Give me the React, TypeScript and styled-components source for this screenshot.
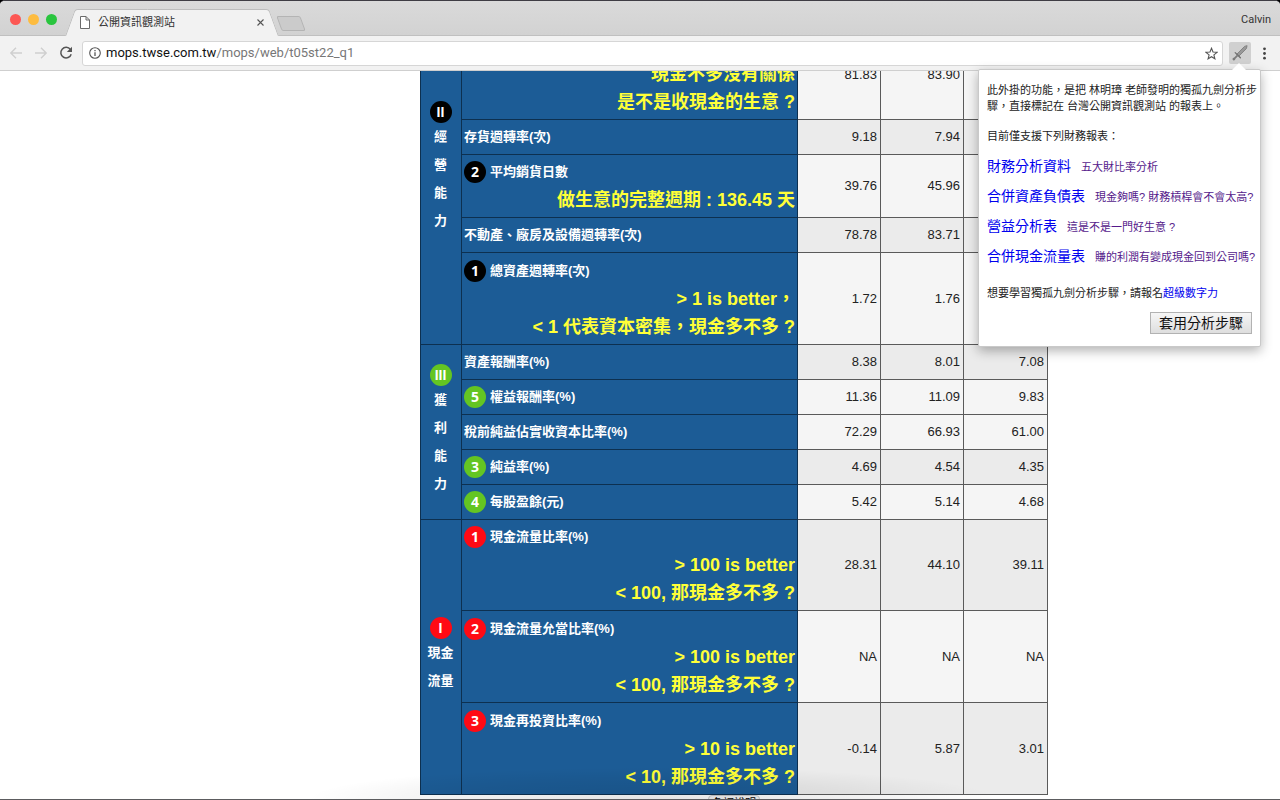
import React from "react";
import styled, { createGlobalStyle, css } from "styled-components";

const cjk = '"Noto Sans CJK TC", sans-serif';

const GlobalStyle = createGlobalStyle`
  * { box-sizing: border-box; }
  body {
    margin: 0;
    background: #000;
    font-family: "Liberation Sans", ${cjk};
  }
`;

const Window = styled.div`
  position: relative;
  display: flex;
  flex-direction: column;
  height: 100vh;
  background: #fff;
  border-top: 1px solid #3f3d44;
  border-bottom: 1px solid #5c5c5f;
  border-radius: 5px 5px 0 0;
  overflow: hidden;
`;

const TabStrip = styled.header`
  display: flex;
  align-items: flex-end;
  flex: none;
  height: 35px;
  padding: 0 9px 0 10px;
  background: linear-gradient(#dadada, #d2d2d2);
  border-bottom: 1px solid #c0c0c0;
`;

const TrafficLights = styled.div`
  display: flex;
  gap: 7px;
  width: 60px;
  padding-bottom: 10px;
`;

const Light = styled.button<{ $color: string }>`
  width: 11px;
  height: 11px;
  padding: 0;
  border: 0;
  border-radius: 50%;
  background: ${(p) => p.$color};
`;

const Tab = styled.div`
  position: relative;
  display: flex;
  align-items: center;
  width: 204px;
  height: 27px;
  margin-bottom: -1px;
  padding: 0 10px;
  font: 11px/16px Roboto, ${cjk};
  color: #333;

  &::before,
  &::after {
    content: "";
    position: absolute;
    top: 0;
    bottom: 0;
    background: #f2f2f2;
    border: 0 solid #bdbdbd;
    border-top-width: 1px;
  }
  &::before {
    left: 0;
    right: 40%;
    border-left-width: 1px;
    border-top-left-radius: 3px;
    transform: skewX(-20deg);
  }
  &::after {
    left: 40%;
    right: 0;
    border-right-width: 1px;
    border-top-right-radius: 3px;
    transform: skewX(20deg);
  }
  > * {
    position: relative;
    z-index: 1;
  }
`;

const TabTitle = styled.span`
  flex: 1;
  margin-left: 8px;
`;

const IconButton = styled.button<{ $active?: boolean }>`
  display: flex;
  align-items: center;
  justify-content: center;
  flex: none;
  padding: 0;
  border: 0;
  background: none;
  ${(p) =>
    p.$active &&
    css`
      width: 22px;
      height: 22px;
      border-radius: 2px;
      background: #d0d0d0;
    `}
`;

const NewTab = styled.button`
  width: 24px;
  height: 15px;
  margin: 0 0 4px 5px;
  padding: 0;
  border: 1px solid #b4b4b4;
  border-radius: 2px;
  background: #cbcbcb;
  transform: skewX(20deg);
`;

const Profile = styled.button`
  margin-left: auto;
  padding: 0 0 7px;
  border: 0;
  background: none;
  font: 11px/16px Roboto, sans-serif;
  color: #333;
`;

const Toolbar = styled.div`
  display: flex;
  align-items: center;
  flex: none;
  height: 35px;
  padding: 0 14px 0 9px;
  background: #f2f2f2;
  border-bottom: 1px solid #cfcfcf;
`;

const NavButtons = styled.div`
  display: flex;
  gap: 11px;
  width: 73px;
`;

const AddressBar = styled.div`
  display: flex;
  align-items: center;
  flex: 1;
  height: 25px;
  margin-right: 6px;
  padding: 0 4px 0 6px;
  gap: 5px;
  border: 1px solid #d6d6d6;
  border-radius: 3px;
  background: #fff;
`;

const Url = styled.a`
  flex: 1;
  font: 13px/20px Roboto, sans-serif;
  color: #777;
  text-decoration: none;
  b {
    font-weight: 400;
    color: #111;
  }
`;

const MenuButton = styled(IconButton)`
  margin-left: 12px;
`;

const Page = styled.main`
  flex: 1;
  min-height: 0;
  overflow: hidden;
  padding-left: 420px;
`;

const Scrolled = styled.div`
  width: 628px;
  margin-top: -15px;
`;

const Report = styled.table`
  width: 100%;
  table-layout: fixed;
  border-collapse: collapse;
  font-size: 13px;
  line-height: 28px;
  color: #222;
`;

const Row = styled.tr<{ $shade: boolean; $height: number }>`
  height: ${(p) => p.$height}px;
  background: ${(p) => (p.$shade ? "#ebebeb" : "#f5f5f5")};
`;

const headCell = css`
  border: 1px solid #0d3050;
  background: #1c5c96;
  color: #fff;
  font-weight: 700;
`;

const GroupCell = styled.th<{ $top: boolean }>`
  ${headCell}
  padding: ${(p) => (p.$top ? "44px 3px 3px 2px" : "0 3px 3px 2px")};
  vertical-align: ${(p) => (p.$top ? "top" : "middle")};
  text-align: center;
`;

const NameCell = styled.th`
  ${headCell}
  padding: 3px 2px;
  text-align: left;
`;

const Value = styled.td<{ $top: boolean }>`
  padding: ${(p) => (p.$top ? "4px 3px 0" : "0 3px")};
  border: 1px solid #5a5a5a;
  text-align: right;
  vertical-align: ${(p) => (p.$top ? "top" : "middle")};
`;

const Name = styled.div`
  display: flex;
  align-items: center;
  gap: 4px;
  height: 28px;
`;

const Note = styled.div`
  font-size: 18px;
  text-align: right;
  color: #ffff38;
  white-space: nowrap;
`;

const Badge = styled.span<{ $color: string }>`
  display: block;
  flex: none;
  width: 22px;
  height: 22px;
  border-radius: 50%;
  background: ${(p) => p.$color};
  font: 700 14px/22px "Noto Sans", sans-serif;
  text-align: center;
  color: #fff;
`;

const GroupBadge = styled(Badge)`
  margin: 0 auto;
  font-family: "Liberation Sans", sans-serif;
`;

const PageButton = styled.button`
  display: block;
  margin: 0 auto;
  padding: 0 3px;
  border: 1px solid #c8c8c8;
  border-radius: 4px;
  background: #f3f3f3;
  font: 11px/14px "Liberation Sans", ${cjk};
`;

const DockShadow = styled.div`
  position: absolute;
  left: 24%;
  right: 22%;
  bottom: 0;
  height: 32px;
  pointer-events: none;
  background: radial-gradient(ellipse 50% 100% at 50% 100%, rgba(0, 0, 0, 0.1), rgba(0, 0, 0, 0.05) 60%, transparent);
`;

const Popup = styled.section`
  position: absolute;
  top: 68px;
  right: 19px;
  width: 283px;
  padding: 12px 8px;
  border: 1px solid #c9c9c9;
  border-radius: 2px;
  background: #fff;
  box-shadow: 0 4px 12px rgba(0, 0, 0, 0.3);
  font-size: 11px;
  line-height: 16px;
  color: #222;
  white-space: nowrap;

  &::before {
    content: "";
    position: absolute;
    top: -7px;
    right: 14px;
    border: 7px solid transparent;
    border-top-width: 0;
    border-bottom-color: #fff;
  }
`;

const Paragraph = styled.p`
  margin: 0 0 14px;
`;

const ReportList = styled.ul`
  margin: -7px 0 14px;
  padding: 0;
  list-style: none;
`;

const ReportItem = styled.li`
  height: 30px;
  line-height: 30px;
`;

const ReportLink = styled.a`
  margin-right: 10px;
  font-size: 14px;
  color: #00e;
  text-decoration: none;
`;

const VisitedLink = styled.a`
  color: #551a8b;
  text-decoration: none;
`;

const CourseLink = styled.a`
  color: #00e;
  text-decoration: none;
`;

const ApplyButton = styled.button`
  display: block;
  height: 22px;
  margin: -3px 0 0 auto;
  padding: 0 8px;
  border: 1px solid #b2b2b2;
  background: linear-gradient(#f6f6f6, #dedede);
  font: 14px/20px "Liberation Sans", ${cjk};
  color: #111;
`;

type Entry = {
  name?: string;
  step?: string;
  notes?: string[];
  values: string[];
  height: number;
  shade: boolean;
};

type Group = {
  numeral: string;
  color: string;
  lines: string[];
  top?: boolean;
  rows: Entry[];
};

const groups: Group[] = [
  {
    numeral: "II",
    color: "#000",
    lines: ["經", "營", "能", "力"],
    top: true,
    rows: [
      { notes: ["現金不多沒有關係", "是不是收現金的生意 ?"], values: ["81.83", "83.90", ""], height: 63, shade: false },
      { name: "存貨週轉率(次)", values: ["9.18", "7.94", ""], height: 35, shade: true },
      { name: "平均銷貨日數", step: "2", notes: ["做生意的完整週期 : 136.45 天"], values: ["39.76", "45.96", ""], height: 63, shade: false },
      { name: "不動產、廠房及設備週轉率(次)", values: ["78.78", "83.71", ""], height: 35, shade: true },
      { name: "總資產週轉率(次)", step: "1", notes: ["> 1 is better，", "< 1 代表資本密集，現金多不多 ?"], values: ["1.72", "1.76", ""], height: 92, shade: false },
    ],
  },
  {
    numeral: "III",
    color: "#64c522",
    lines: ["獲", "利", "能", "力"],
    rows: [
      { name: "資產報酬率(%)", values: ["8.38", "8.01", "7.08"], height: 35, shade: true },
      { name: "權益報酬率(%)", step: "5", values: ["11.36", "11.09", "9.83"], height: 35, shade: false },
      { name: "稅前純益佔實收資本比率(%)", values: ["72.29", "66.93", "61.00"], height: 35, shade: false },
      { name: "純益率(%)", step: "3", values: ["4.69", "4.54", "4.35"], height: 35, shade: true },
      { name: "每股盈餘(元)", step: "4", values: ["5.42", "5.14", "4.68"], height: 35, shade: false },
    ],
  },
  {
    numeral: "I",
    color: "#ff0a14",
    lines: ["現金", "流量"],
    rows: [
      { name: "現金流量比率(%)", step: "1", notes: ["> 100 is better", "< 100, 那現金多不多 ?"], values: ["28.31", "44.10", "39.11"], height: 91, shade: true },
      { name: "現金流量允當比率(%)", step: "2", notes: ["> 100 is better", "< 100, 那現金多不多 ?"], values: ["NA", "NA", "NA"], height: 92, shade: false },
      { name: "現金再投資比率(%)", step: "3", notes: ["> 10 is better", "< 10, 那現金多不多 ?"], values: ["-0.14", "5.87", "3.01"], height: 92, shade: true },
    ],
  },
];

const links = [
  ["財務分析資料", "五大財比率分析"],
  ["合併資產負債表", "現金夠嗎? 財務槓桿會不會太高?"],
  ["營益分析表", "這是不是一門好生意 ?"],
  ["合併現金流量表", "賺的利潤有變成現金回到公司嗎?"],
];

const Arrow = ({ back }: { back?: boolean }) => (
  <svg width="14" height="14" viewBox="0 0 14 14" fill="none" stroke="#cfcfcf" strokeWidth="1.4">
    <path d={back ? "M13 7H2M7 1.8 1.8 7 7 12.2" : "M1 7h11M7 1.8 12.2 7 7 12.2"} />
  </svg>
);

export default function App() {
  return (
    <>
      <GlobalStyle />
      <Window>
        <TabStrip>
          <TrafficLights>
            <Light $color="#fc5753" aria-label="Close window" />
            <Light $color="#fdbc40" aria-label="Minimise" />
            <Light $color="#29c53e" aria-label="Zoom" />
          </TrafficLights>
          <Tab>
            <svg width="10" height="13" viewBox="0 0 10 13" fill="#fff" stroke="#6a6a6a">
              <path d="M.5.5H6l3.500 3.500v8.500H.5zM6 .5V4h3.500" />
            </svg>
            <TabTitle>公開資訊觀測站</TabTitle>
            <IconButton aria-label="Close tab">
              <svg width="7" height="7" viewBox="0 0 7 7" stroke="#555" strokeWidth="1.1">
                <path d="m.5.5 6 6m0-6-6 6" />
              </svg>
            </IconButton>
          </Tab>
          <NewTab aria-label="New tab" />
          <Profile>Calvin</Profile>
        </TabStrip>

        <Toolbar>
          <NavButtons>
            <IconButton aria-label="Back">
              <Arrow back />
            </IconButton>
            <IconButton aria-label="Forward">
              <Arrow />
            </IconButton>
            <IconButton aria-label="Reload">
              <svg width="14" height="14" viewBox="0 0 14 14" fill="none" stroke="#555" strokeWidth="1.5">
                <path d="M11.400 3.500A5.300 5.300 0 1 0 12.200 8.200" />
                <path d="M13 .8v5.200H7.800z" fill="#555" stroke="none" />
              </svg>
            </IconButton>
          </NavButtons>
          <AddressBar>
            <svg width="12" height="12" viewBox="0 0 12 12" fill="none" stroke="#555" strokeWidth="1.1">
              <circle cx="6" cy="6" r="5.300" />
              <path d="M6 5.200v3.700M6 3v1.300" strokeWidth="1.3" />
            </svg>
            <Url href="#">
              <b>mops.twse.com.tw</b>/mops/web/t05st22_q1
            </Url>
            <IconButton aria-label="Bookmark">
              <svg width="13" height="13" viewBox="0 0 13 13" fill="none" stroke="#555" strokeWidth="1.1">
                <path d="m6.500 1.300 1.500 3.700 4 .3-3.100 2.600 1 3.900-3.400-2.100-3.400 2.100 1-3.900L1 5.300l4-.3z" />
              </svg>
            </IconButton>
          </AddressBar>
          <IconButton $active aria-label="Extension">
            <svg width="16" height="16" viewBox="0 0 16 16" fill="none" strokeLinecap="round">
              <path d="M15 1l-.6 2.600-7.600 7.600-2-2 7.600-7.600z" fill="#999" stroke="#777" strokeWidth=".8" strokeLinejoin="round" />
              <path d="M3.200 7.600l5.200 5.200" stroke="#707070" strokeWidth="1.3" />
              <path d="M5.300 10.700l-3.500 3.500" stroke="#7c7c7c" strokeWidth="1.8" />
              <circle cx="1.900" cy="14.100" r="1.400" fill="#7c7c7c" />
            </svg>
          </IconButton>
          <MenuButton aria-label="Menu">
            <svg width="3" height="13" viewBox="0 0 3 13" fill="#444">
              <circle cx="1.500" cy="1.800" r="1.400" />
              <circle cx="1.500" cy="6.500" r="1.400" />
              <circle cx="1.500" cy="11.200" r="1.400" />
            </svg>
          </MenuButton>
        </Toolbar>

        <Page>
          <Scrolled>
            <Report>
              <colgroup>
                <col style={{ width: 41 }} />
                <col />
                <col style={{ width: 83 }} />
                <col style={{ width: 83 }} />
                <col style={{ width: 84 }} />
              </colgroup>
              <tbody>
                {groups.map((group) =>
                  group.rows.map((row, i) => {
                    const cut = !row.name;
                    return (
                      <Row key={group.numeral + i} $shade={row.shade} $height={row.height}>
                        {i === 0 && (
                          <GroupCell rowSpan={group.rows.length} scope="rowgroup" $top={!!group.top}>
                            <GroupBadge $color={group.color}>{group.numeral}</GroupBadge>
                            {group.lines.map((line) => (
                              <div key={line}>{line}</div>
                            ))}
                          </GroupCell>
                        )}
                        <NameCell scope="row">
                          {row.name && (
                            <Name>
                              {row.step && <Badge $color={group.color}>{row.step}</Badge>}
                              {row.name}
                            </Name>
                          )}
                          {row.notes?.map((note) => (
                            <Note key={note}>{note}</Note>
                          ))}
                        </NameCell>
                        {row.values.map((value, n) => (
                          <Value key={n} $top={cut}>
                            {value}
                          </Value>
                        ))}
                      </Row>
                    );
                  })
                )}
              </tbody>
            </Report>
            <PageButton>名詞說明</PageButton>
          </Scrolled>
        </Page>

        <DockShadow />

        <Popup>
          <Paragraph>
            此外掛的功能，是把 林明璋 老師發明的獨孤九劍分析步
            <br />
            驟，直接標記在 台灣公開資訊觀測站 的報表上。
          </Paragraph>
          <Paragraph>目前僅支援下列財務報表：</Paragraph>
          <ReportList>
            {links.map(([title, note]) => (
              <ReportItem key={title}>
                <ReportLink href="#">{title}</ReportLink>
                <VisitedLink href="#">{note}</VisitedLink>
              </ReportItem>
            ))}
          </ReportList>
          <Paragraph>
            想要學習獨孤九劍分析步驟，請報名<CourseLink href="#">超級數字力</CourseLink>
          </Paragraph>
          <ApplyButton>套用分析步驟</ApplyButton>
        </Popup>
      </Window>
    </>
  );
}
